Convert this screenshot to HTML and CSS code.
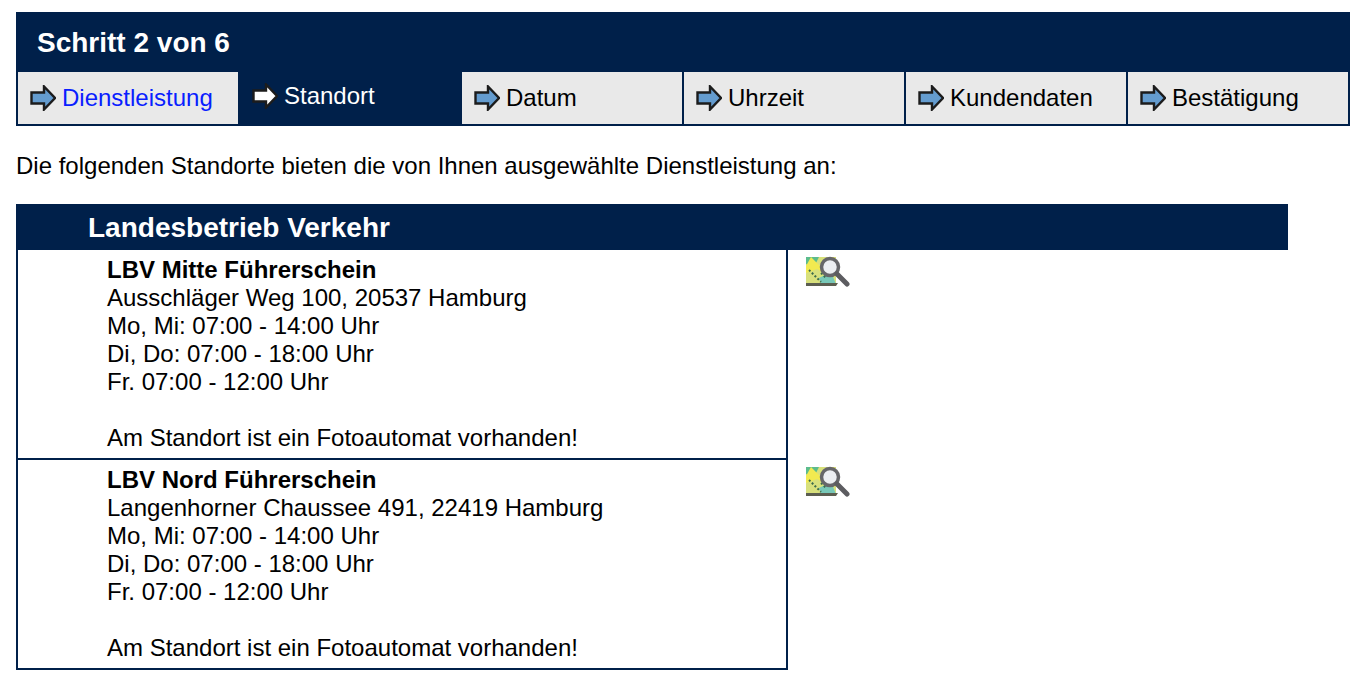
FILE: index.html
```html
<!DOCTYPE html>
<html lang="de">
<head>
    <meta charset="UTF-8">
    <title>Schritt 2 von 6</title>
    <link rel="stylesheet" href="styles.css">
</head>
<body>
    <svg width="0" height="0" class="defs">
        <defs>
            <symbol id="arrow" viewBox="0 0 26 26">
                <path d="M1.500 7.500H14V1.500L25 13L14 24.500V18.500H1.500Z" fill="currentColor" stroke="#1c1c1c" stroke-width="2.400" stroke-linejoin="miter"/>
            </symbol>
            <symbol id="map" viewBox="0 0 44 32">
                <path d="M0 1H30V29H0Z" fill="#d8e07c"/>
                <path d="M0 1H13L8 11L0 8Z" fill="#5cbc8c"/>
                <path d="M5 1L15 11L23 1H28L28 12L21 19L11 13L0 17V10Z" fill="#f2ea50"/>
                <path d="M13 22L25 16L30 28H15Z" fill="#78c8b8"/>
                <path d="M3 14L9 20L15 26M15 17L20 22" fill="none" stroke="#3c6a4c" stroke-width="2" stroke-dasharray="2 2"/>
                <path d="M0 27H32L30 30H0Z" fill="#5c5e50"/>
                <circle cx="24" cy="11" r="8.500" fill="#eceef2" stroke="#66666a" stroke-width="3.500"/>
                <path d="M31 18L41 28" stroke="#5c5c60" stroke-width="5" stroke-linecap="round"/>
            </symbol>
        </defs>
    </svg>

    <div class="steps">
        <div class="steps-title">Schritt 2 von 6</div>
        <div class="tabs">
            <div class="tab"><svg class="arrow"><use href="#arrow"/></svg><a href="#">Dienstleistung</a></div>
            <div class="tab active"><svg class="arrow"><use href="#arrow"/></svg>Standort</div>
            <div class="tab"><svg class="arrow"><use href="#arrow"/></svg>Datum</div>
            <div class="tab"><svg class="arrow"><use href="#arrow"/></svg>Uhrzeit</div>
            <div class="tab"><svg class="arrow"><use href="#arrow"/></svg>Kundendaten</div>
            <div class="tab"><svg class="arrow"><use href="#arrow"/></svg>Bestätigung</div>
        </div>
    </div>

    <p class="intro">Die folgenden Standorte bieten die von Ihnen ausgewählte Dienstleistung an:</p>

    <div class="group-head">Landesbetrieb Verkehr</div>

    <div class="location">
        <div class="location-text">
            <strong>LBV Mitte Führerschein</strong><br>
            Ausschläger Weg 100, 20537 Hamburg<br>
            Mo, Mi: 07:00 - 14:00 Uhr<br>
            Di, Do: 07:00 - 18:00 Uhr<br>
            Fr. 07:00 - 12:00 Uhr<br>
            <br>
            Am Standort ist ein Fotoautomat vorhanden!
        </div>
        <svg class="map-icon"><use href="#map"/></svg>
    </div>
    <div class="location">
        <div class="location-text">
            <strong>LBV Nord Führerschein</strong><br>
            Langenhorner Chaussee 491, 22419 Hamburg<br>
            Mo, Mi: 07:00 - 14:00 Uhr<br>
            Di, Do: 07:00 - 18:00 Uhr<br>
            Fr. 07:00 - 12:00 Uhr<br>
            <br>
            Am Standort ist ein Fotoautomat vorhanden!
        </div>
        <svg class="map-icon"><use href="#map"/></svg>
    </div>
</body>
</html>
```

FILE: styles.css
```css
body {
    margin: 0;
    padding: 12px 14px 0 16px;
    font-family: "Liberation Sans", Arial, sans-serif;
    font-size: 24px;
    line-height: 28px;
    color: #000;
    background: #fff;
}
.defs {
    display: block;
}
.steps {
    background: #00204a;
    padding: 0 2px 2px;
}
.steps-title {
    height: 60px;
    padding-left: 19px;
    font-size: 28px;
    font-weight: bold;
    line-height: 61px;
    color: #fff;
}
.tabs {
    display: grid;
    grid-template-columns: 220px repeat(5, 222px);
}
.tab {
    display: flex;
    align-items: center;
    gap: 6px;
    height: 52px;
    padding-left: 12px;
    background: #e9e9e9;
    color: #000;
    border-left: 2px solid #00204a;
}
.tab:first-child {
    border-left: 0;
}
.tab.active {
    background: #00204a;
    color: #fff;
    padding-bottom: 4px;
    height: 48px;
    border-left: 0;
    padding-left: 14px;
}
.tab a {
    color: #0a1eff;
    text-decoration: none;
}
.arrow {
    width: 26px;
    height: 26px;
    color: #649ccf;
    flex: none;
    filter: blur(0.3px);
}
.active .arrow {
    color: #fff;
}
.intro {
    margin: 26px 0 24px;
}
.group-head {
    width: 1200px;
    height: 46px;
    padding-left: 72px;
    background: #00204a;
    color: #fff;
    font-size: 28px;
    font-weight: bold;
    line-height: 48px;
}
.location {
    display: flex;
    align-items: flex-start;
}
.location-text {
    box-sizing: border-box;
    width: 772px;
    height: 210px;
    padding: 6px 0 0 89px;
    border: 2px solid #00204a;
    border-top: 0;
}
.map-icon {
    width: 44px;
    height: 32px;
    margin: 6px 0 0 18px;
    filter: blur(0.6px);
}
```
